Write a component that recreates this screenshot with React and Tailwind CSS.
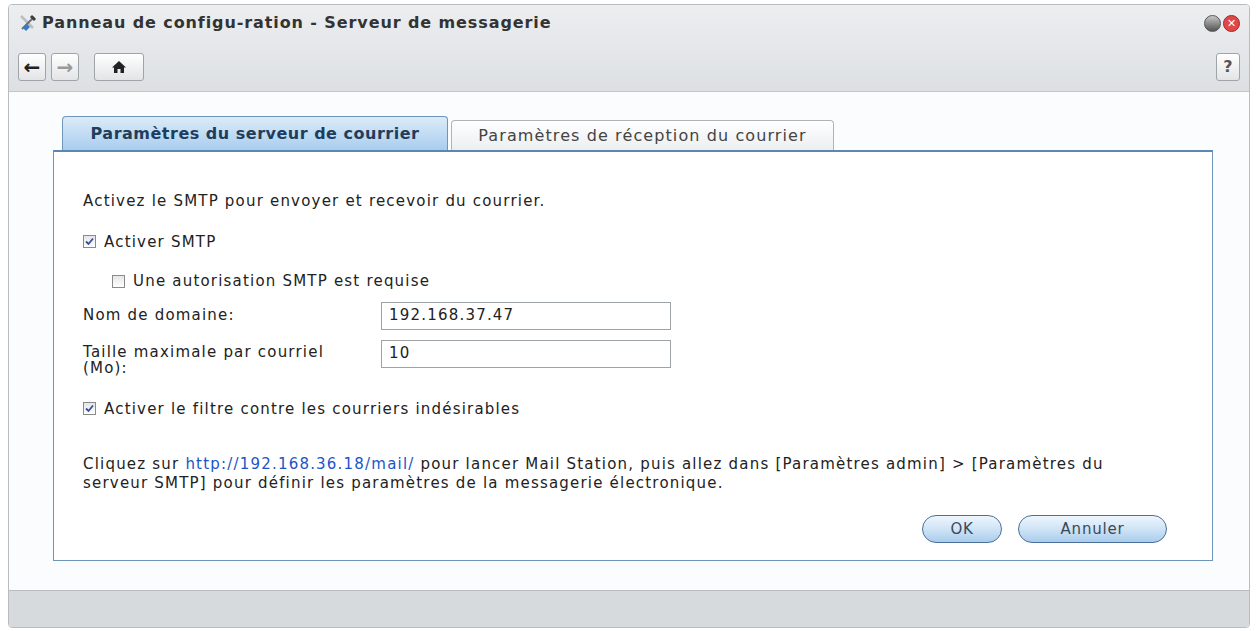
export default function App() {
  const f = { fontFamily: '"DejaVu Sans", Verdana, sans-serif' };
  const Check = ({ on }) => (
    <span className="inline-flex w-[13px] h-[13px] border border-[#8a8a8a] bg-gradient-to-b from-[#e6e6e6] to-white items-center justify-center mr-[8px]">
      {on && (
        <svg width="9" height="9" viewBox="0 0 9 9"><path d="M1 4.5 L3.5 7 L8 1.5" stroke="#3a4f9a" strokeWidth="1.8" fill="none" /></svg>
      )}
    </span>
  );
  const Btn = ({ children, w }) => (
    <button className={`h-[28px] ${w} rounded-full border border-[#4a6f98] bg-gradient-to-b from-[#eef6fd] via-[#cfe4f6] to-[#a9cdec] text-[15px] tracking-[0.8px] text-[#3a4a5a]`}>{children}</button>
  );
  return (
    <div style={f} className="w-[1257px] h-[631px] bg-white pt-[4px] pl-[8px] pr-[7px] pb-[3px]">
      <div className="h-full flex flex-col border border-[#b8bcc0] rounded-[4px] overflow-hidden">
        <div className="bg-gradient-to-b from-[#eceef0] to-[#dde0e3]">
          <div className="h-[36px] flex items-center px-[9px]">
            <svg width="20" height="20" viewBox="0 0 20 20" className="mr-[4px]">
              <path d="M3 3 L15 15" stroke="#b9bec4" strokeWidth="2.5" />
              <path d="M4 16 L16 4" stroke="#6c7075" strokeWidth="2" />
              <path d="M9 11 L12 14 L8 18 L5 15 Z" fill="#2f7ccd" />
              <path d="M13 3 L17 7" stroke="#3c3f42" strokeWidth="3" />
            </svg>
            <span className="font-bold text-[16px] tracking-[0.9px] text-[#333]">Panneau de configu-ration - Serveur de messagerie</span>
            <div className="ml-auto flex gap-[2px]">
              <span className="w-[17px] h-[17px] rounded-full bg-gradient-to-b from-[#c8c8c8] to-[#555] border border-[#555]" />
              <span className="w-[17px] h-[17px] rounded-full bg-[#e04848] border border-[#b02020] flex items-center justify-center text-white text-[11px] font-bold leading-none">✕</span>
            </div>
          </div>
          <div className="h-[50px] flex items-start px-[9px] pt-[12px] gap-[5px]">
            {["←", "→"].map((a, i) => (
              <span key={i} className={`w-[28px] h-[28px] border border-[#a0a4a8] rounded-[3px] bg-gradient-to-b from-white to-[#e2e4e6] flex items-center justify-center text-[20px] font-bold ${i ? "text-[#999]" : "text-[#222]"}`}>{a}</span>
            ))}
            <span className="ml-[10px] w-[50px] h-[28px] border border-[#a0a4a8] rounded-[3px] bg-gradient-to-b from-white to-[#e2e4e6] flex items-center justify-center">
              <svg width="16" height="14" viewBox="0 0 16 14"><path d="M8 1 L1 7.5 H3 V13 H6.5 V9 H9.5 V13 H13 V7.5 H15 Z" fill="#222" /></svg>
            </span>
            <span className="ml-auto w-[24px] h-[28px] border border-[#a0a4a8] rounded-[3px] bg-gradient-to-b from-white to-[#e2e4e6] flex items-center justify-center text-[16px] font-bold text-[#555]">?</span>
          </div>
        </div>
        <div className="flex-1 bg-[#fbfcfd] border-t border-[#c4c7ca] pl-[44px] pr-[36px] pt-[24px]">
          <div className="flex gap-[3px] pl-[9px] items-end">
            <div className="w-[386px] h-[34px] rounded-t-[4px] border border-[#6e96bb] border-b-0 bg-gradient-to-b from-[#dcebf8] to-[#a9cdef] flex items-center justify-center font-bold text-[16px] tracking-[0.5px] text-[#1f3d5c]">Paramètres du serveur de courrier</div>
            <div className="w-[383px] h-[30px] rounded-t-[4px] border border-[#b0b4b8] border-b-0 bg-gradient-to-b from-white to-[#eceef0] flex items-center justify-center text-[16px] tracking-[1.1px] text-[#444]">Paramètres de réception du courrier</div>
          </div>
          <div className="h-[411px] border border-[#6e96bb] border-t-[2px] border-t-[#5d87b2] bg-white px-[29px] pt-[38px] text-[15px] tracking-[1.2px] text-[#222]">
            <div>Activez le SMTP pour envoyer et recevoir du courrier.</div>
            <div className="mt-[18px] flex items-center"><Check on />Activer SMTP</div>
            <div className="mt-[17px] ml-[29px] flex items-center"><Check />Une autorisation SMTP est requise</div>
            <div className="mt-[9px] flex items-center h-[28px]">
              <span className="w-[298px]">Nom de domaine:</span>
              <span className="w-[290px] h-[28px] border border-[#9ea3a8] px-[7px] flex items-center">192.168.37.47</span>
            </div>
            <div className="mt-[10px] flex items-start">
              <span className="w-[298px] leading-[16px] pt-[4px]">Taille maximale par courriel<br />(Mo):</span>
              <span className="w-[290px] h-[28px] border border-[#9ea3a8] px-[7px] flex items-center">10</span>
            </div>
            <div className="mt-[22px] flex items-center"><Check on />Activer le filtre contre les courriers indésirables</div>
            <div className="mt-[35px] leading-[19px] pr-[20px]">
              Cliquez sur <span className="text-[#1a55c8]">http://192.168.36.18/mail/</span> pour lancer Mail Station, puis allez dans [Paramètres admin] &gt; [Paramètres du serveur SMTP] pour définir les paramètres de la messagerie électronique.
            </div>
            <div className="mt-[22px] flex justify-end gap-[16px] pr-[16px]">
              <Btn w="w-[80px]">OK</Btn>
              <Btn w="w-[149px]">Annuler</Btn>
            </div>
          </div>
        </div>
        <div className="h-[37px] bg-[#d7dadd] border-t border-[#b8bcc0]" />
      </div>
    </div>
  );
}
